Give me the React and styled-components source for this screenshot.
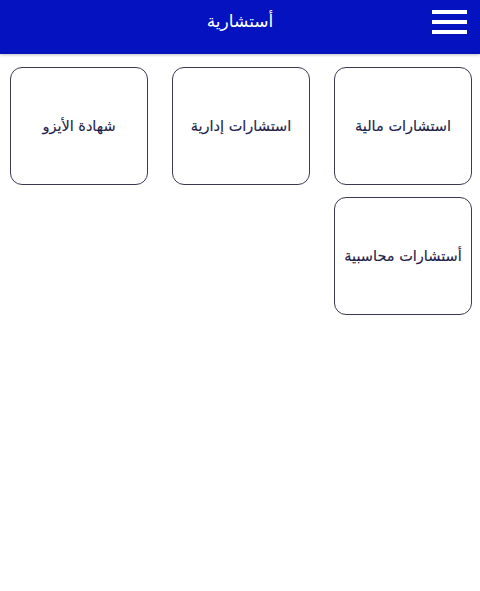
import React from "react";
import styled, { createGlobalStyle } from "styled-components";

const Global = createGlobalStyle`
  html, body { margin: 0; padding: 0; background: #ffffff; }
  body { font-family: "DejaVu Sans", "Noto Sans", sans-serif; }
`;

const Page = styled.div`
  width: 480px;
  min-height: 591px;
  background: #fff;
  direction: rtl;
`;

const Header = styled.header`
  height: 54px;
  background: #0512bf;
  display: flex;
  align-items: center;
  justify-content: center;
  position: relative;
  box-shadow: 0 1px 3px rgba(0, 0, 0, 0.25);
`;

const Title = styled.h1`
  margin: 0;
  color: #fff;
  font-size: 17px;
  font-weight: normal;
  padding-bottom: 12px;
`;

const MenuButton = styled.button`
  position: absolute;
  right: 13px;
  top: 10px;
  width: 35px;
  height: 24px;
  padding: 0;
  border: none;
  background: transparent;
  display: flex;
  flex-direction: column;
  justify-content: space-between;
`;

const Bar = styled.span`
  display: block;
  height: 4px;
  width: 100%;
  background: #fff;
`;

const Grid = styled.div`
  display: grid;
  grid-template-columns: repeat(3, 138px);
  column-gap: 24px;
  row-gap: 12px;
  padding: 13px 8px 0 10px;
`;

const Card = styled.div`
  height: 118px;
  box-sizing: border-box;
  border: 1.6px solid #3a3a50;
  border-radius: 12px;
  background: #fff;
  display: flex;
  align-items: center;
  justify-content: center;
  text-align: center;
  color: #1e1e4a;
  font-size: 14.5px;
  -webkit-text-stroke: 0.15px #1e1e4a;
`;

const items = [
  "استشارات مالية",
  "استشارات إدارية",
  "شهادة الأيزو",
  "أستشارات محاسبية",
];

export default function App() {
  return (
    <>
      <Global />
      <Page>
        <Header>
          <Title>أستشارية</Title>
          <MenuButton aria-label="menu">
            <Bar />
            <Bar />
            <Bar />
          </MenuButton>
        </Header>
        <Grid>
          {items.map((t) => (
            <Card key={t}>{t}</Card>
          ))}
        </Grid>
      </Page>
    </>
  );
}
